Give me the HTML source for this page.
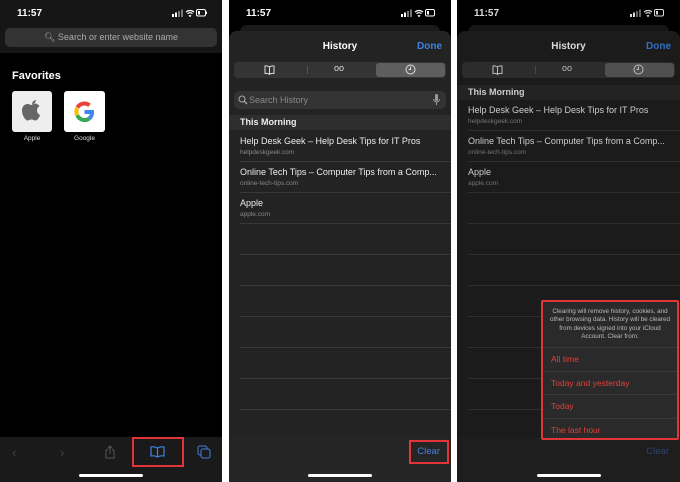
<!DOCTYPE html>
<html><head><meta charset="utf-8"><style>
*{margin:0;padding:0;box-sizing:border-box}
body{width:680px;height:482px;background:#fff;position:relative;overflow:hidden;font-family:"Liberation Sans",sans-serif;color:#fff}
.a{position:absolute}
.p{position:absolute;top:0;height:482px;background:#000;overflow:hidden}
.time{position:absolute;left:17px;top:8px;font-size:10px;font-weight:bold}
.stat{position:absolute;right:14px;top:9px;width:36px;height:8px}
.sheet{position:absolute;left:0;right:0;top:31px;bottom:0;background:#232323;border-radius:8px 8px 0 0}
.back{position:absolute;left:11px;right:11px;top:25px;height:20px;background:#1a1a1a;border-radius:7px}
.title{position:absolute;left:0;right:0;top:41px;text-align:center;font-size:10px;font-weight:bold}
.done{position:absolute;right:9px;top:41px;font-size:10px;font-weight:bold;color:#3f82e0}
.seg{position:absolute;left:5px;right:5px;top:62px;height:16px;background:#343434;border-radius:4px}
.seg .sel{position:absolute;right:1px;top:1px;width:69px;height:14px;background:#5e5e5e;border-radius:3px}
.hdr{position:absolute;left:0;right:0;height:15px;background:#2e2e2e;font-size:9px;font-weight:bold;padding-left:11px;line-height:15px;color:#eee}
.row{position:absolute;left:11px;right:0;height:31px;border-bottom:1px solid #383838}
.row b{position:absolute;left:0;top:5px;font-size:9px;font-weight:normal;color:#eee;white-space:nowrap}
.row i{position:absolute;left:0;top:18px;font-size:6.5px;font-style:normal;color:#888}
.tb{position:absolute;left:0;right:0;top:437px;bottom:0;background:#252525}
.home{position:absolute;bottom:5px;left:50%;margin-left:-32px;width:64px;height:3px;border-radius:2px;background:#fff}
</style></head><body>

<!-- Panel 1 -->
<div class="p" style="left:0;width:222px">
<div class="a" style="left:0;top:0;width:222px;height:53px;background:#161616"></div>
<div class="time">11:57</div>
<svg class="stat" viewBox="0 0 36 8"><rect x="0" y="5" width="2" height="3" fill="#fff"/><rect x="3" y="3.5" width="2" height="4.5" fill="#fff"/><rect x="6" y="2" width="2" height="6" fill="#777"/><rect x="9" y="0.5" width="2" height="7.5" fill="#777"/><path d="M14 3a6 6 0 0 1 8 0M15.5 4.6a4 4 0 0 1 5 0M17 6.2l1 1.2 1-1.2" stroke="#fff" stroke-width="1.2" fill="none"/><rect x="24.5" y="0.5" width="9" height="6.5" rx="1.5" stroke="#fff" fill="none"/><rect x="26" y="2" width="2" height="3.5" fill="#fff"/><rect x="34" y="2.5" width="1" height="2.5" fill="#fff"/></svg>
<div class="a" style="left:5px;top:28px;width:212px;height:19px;background:#333;border-radius:5px;font-size:9px;color:#aaa;text-align:center;line-height:19px">&#x1F50D;&#xFE0E; Search or enter website name</div>
<div class="a" style="left:12px;top:70px;font-size:11px;font-weight:bold">Favorites</div>
<div class="a" style="left:12px;top:91px;width:40px;height:41px;background:#eee;border-radius:3px"><svg viewBox="0 0 40 41" width="40" height="41"><path d="M24 9c-2 .3-4 2-4 4 2 0 4-2 4-4zM20 14c-1.5 0-3-1-4.5-1-3 0-5.5 2.5-5.5 6.5 0 5 3.5 10 5.5 10 1.3 0 2-1 4-1s2.5 1 4 1c2 0 4-3.5 4.5-5.5-2-1-3-2.5-3-4.5s1-3.5 2.5-4.5c-1-1.5-3-2.5-4.5-2.5-1.5 0-2.5 1-3 1z" fill="#666"/></svg></div>
<div class="a" style="left:64px;top:91px;width:41px;height:41px;background:#fff;border-radius:3px"><svg viewBox="0 0 41 41" width="41" height="41"><path d="M20.5 12.5a8 8 0 0 0-7 4" stroke="#ea4335" stroke-width="4" fill="none"/><path d="M20.5 12.5a8 8 0 0 1 5 1.8" stroke="#ea4335" stroke-width="4" fill="none"/><path d="M13.3 16.8a8 8 0 0 0 0 7.5" stroke="#fbbc05" stroke-width="4" fill="none"/><path d="M13.3 24.3a8 8 0 0 0 12 3.2" stroke="#34a853" stroke-width="4" fill="none"/><path d="M25.3 27.5a8 8 0 0 0 2.7-6.5h-7.5" stroke="#4285f4" stroke-width="4" fill="none"/></svg></div>
<div class="a" style="left:12px;top:135px;width:40px;text-align:center;font-size:6.5px;color:#ddd">Apple</div>
<div class="a" style="left:64px;top:135px;width:41px;text-align:center;font-size:6.5px;color:#ddd">Google</div>
<div class="tb" style="background:#1a1a1a"></div>
<div class="a" style="left:12px;top:445px;font-size:13px;color:#444">&#8249;</div>
<div class="a" style="left:60px;top:445px;font-size:13px;color:#444">&#8250;</div>
<svg class="a" style="left:104px;top:445px" width="12" height="14" viewBox="0 0 12 14"><path d="M4 5H2v8h8V5H8M6 9V1M3.5 3.5 6 1l2.5 2.5" stroke="#555" fill="none"/></svg>
<svg class="a" style="left:150px;top:446px" width="15" height="12" viewBox="0 0 15 12"><path d="M7.5 2C6 1 3 .5 1 1v9c2-.5 5 0 6.5 1 1.5-1 4.5-1.5 6.5-1V1c-2-.5-5 0-6.5 1zM7.5 2v9" stroke="#3f82e0" stroke-width="1.2" fill="none"/></svg>
<svg class="a" style="left:197px;top:445px" width="14" height="14" viewBox="0 0 14 14"><rect x="1" y="1" width="9" height="9" rx="2" stroke="#3f82e0" fill="none"/><rect x="4" y="4" width="9" height="9" rx="2" stroke="#3f82e0" fill="#1a1a1a"/></svg>
<div class="a" style="left:132px;top:437px;width:52px;height:30px;border:2px solid #e0363a"></div>
<div class="home"></div>
</div>

<!-- Panel 2 -->
<div class="p" style="left:229px;width:222px">
<div class="time">11:57</div>
<svg class="stat" viewBox="0 0 36 8"><rect x="0" y="5" width="2" height="3" fill="#fff"/><rect x="3" y="3.5" width="2" height="4.5" fill="#fff"/><rect x="6" y="2" width="2" height="6" fill="#777"/><rect x="9" y="0.5" width="2" height="7.5" fill="#777"/><path d="M14 3a6 6 0 0 1 8 0M15.5 4.6a4 4 0 0 1 5 0M17 6.2l1 1.2 1-1.2" stroke="#fff" stroke-width="1.2" fill="none"/><rect x="24.5" y="0.5" width="9" height="6.5" rx="1.5" stroke="#fff" fill="none"/><rect x="26" y="2" width="2" height="3.5" fill="#fff"/></svg>
<div class="back"></div>
<div class="sheet"></div>
<div class="title">History</div><div class="done">Done</div>
<div class="seg"><div class="sel"></div>
<svg class="a" style="left:30px;top:3px" width="11" height="10" viewBox="0 0 11 10"><path d="M5.5 2C4.5 1 2 .7 1 1v7.5c1.5-.3 3.5 0 4.5.8 1-.8 3-1.1 4.5-.8V1c-1-.3-3.5 0-4.5 1zM5.5 2v7" stroke="#ddd" fill="none"/></svg>
<div class="a" style="left:100px;top:1px;font-size:9px;color:#ddd">oo</div>
<svg class="a" style="left:171px;top:2px" width="11" height="11" viewBox="0 0 11 11"><circle cx="5.5" cy="5.5" r="4.5" stroke="#ddd" fill="none"/><path d="M5.5 2.5v3H3.5" stroke="#ddd" fill="none"/></svg>
<div class="a" style="left:73px;top:4px;width:1px;height:8px;background:#555"></div></div>
<div class="a" style="left:5px;top:91px;width:212px;height:18px;background:#333;border-radius:5px;font-size:9px;color:#888;line-height:18px;padding-left:15px">Search History</div>
<svg class="a" style="left:9px;top:95px" width="10" height="10" viewBox="0 0 10 10"><circle cx="4" cy="4" r="3" stroke="#aaa" fill="none"/><path d="M6.2 6.2 9 9" stroke="#aaa" stroke-width="1.3"/></svg>
<svg class="a" style="left:204px;top:94px" width="7" height="12" viewBox="0 0 7 12"><rect x="2" y="0" width="3" height="7" rx="1.5" fill="#999"/><path d="M.5 5a3 3 0 0 0 6 0M3.5 8v3" stroke="#999" fill="none"/></svg>
<div class="hdr" style="top:115px">This Morning</div>
<div class="row" style="top:131px"><b>Help Desk Geek – Help Desk Tips for IT Pros</b><i>helpdeskgeek.com</i></div>
<div class="row" style="top:162px"><b>Online Tech Tips – Computer Tips from a Comp...</b><i>online-tech-tips.com</i></div>
<div class="row" style="top:193px"><b>Apple</b><i>apple.com</i></div>
<div class="row" style="top:224px"></div><div class="row" style="top:255px"></div><div class="row" style="top:286px"></div><div class="row" style="top:317px"></div><div class="row" style="top:348px"></div><div class="row" style="top:379px"></div><div class="row" style="top:410px;border:none"></div>
<div class="tb"></div>
<div class="a" style="right:11px;top:446px;font-size:9.5px;color:#3f82e0">Clear</div>
<div class="a" style="left:180px;top:440px;width:40px;height:24px;border:2px solid #e0363a"></div>
<div class="home"></div>
</div>

<!-- Panel 3 -->
<div class="p" style="left:457px;width:223px">
<div class="time">11:57</div>
<svg class="stat" viewBox="0 0 36 8"><rect x="0" y="5" width="2" height="3" fill="#fff"/><rect x="3" y="3.5" width="2" height="4.5" fill="#fff"/><rect x="6" y="2" width="2" height="6" fill="#777"/><rect x="9" y="0.5" width="2" height="7.5" fill="#777"/><path d="M14 3a6 6 0 0 1 8 0M15.5 4.6a4 4 0 0 1 5 0M17 6.2l1 1.2 1-1.2" stroke="#fff" stroke-width="1.2" fill="none"/><rect x="24.5" y="0.5" width="9" height="6.5" rx="1.5" stroke="#fff" fill="none"/><rect x="26" y="2" width="2" height="3.5" fill="#fff"/></svg>
<div class="back"></div>
<div class="sheet" style="background:#202020"></div>
<div class="title">History</div><div class="done">Done</div>
<div class="seg"><div class="sel"></div>
<svg class="a" style="left:30px;top:3px" width="11" height="10" viewBox="0 0 11 10"><path d="M5.5 2C4.5 1 2 .7 1 1v7.5c1.5-.3 3.5 0 4.5.8 1-.8 3-1.1 4.5-.8V1c-1-.3-3.5 0-4.5 1zM5.5 2v7" stroke="#ddd" fill="none"/></svg>
<div class="a" style="left:100px;top:1px;font-size:9px;color:#ddd">oo</div>
<svg class="a" style="left:171px;top:2px" width="11" height="11" viewBox="0 0 11 11"><circle cx="5.5" cy="5.5" r="4.5" stroke="#ddd" fill="none"/><path d="M5.5 2.5v3H3.5" stroke="#ddd" fill="none"/></svg>
<div class="a" style="left:73px;top:4px;width:1px;height:8px;background:#555"></div></div>
<div class="hdr" style="top:85px;background:#2a2a2a">This Morning</div>
<div class="row" style="top:100px"><b>Help Desk Geek – Help Desk Tips for IT Pros</b><i>helpdeskgeek.com</i></div>
<div class="row" style="top:131px"><b>Online Tech Tips – Computer Tips from a Comp...</b><i>online-tech-tips.com</i></div>
<div class="row" style="top:162px"><b>Apple</b><i>apple.com</i></div>
<div class="row" style="top:193px"></div><div class="row" style="top:224px"></div><div class="row" style="top:255px"></div><div class="row" style="top:286px"></div><div class="row" style="top:317px"></div><div class="row" style="top:348px"></div><div class="row" style="top:379px"></div><div class="row" style="top:410px;border:none"></div>
<div class="a" style="left:0;top:0;width:223px;height:482px;background:rgba(0,0,0,0.15)"></div>
<div class="tb" style="background:#1e1e1e"></div>
<div class="a" style="right:11px;top:446px;font-size:9.5px;color:#2c4670">Clear</div>
<div class="a" style="left:84px;top:300px;width:138px;height:140px;border:2px solid #e0363a;background:#2a2a2a;border-radius:2px">
 <div style="padding:6px 6px 0;height:46px;font-size:6.3px;line-height:8.3px;color:#bbb;text-align:center;border-bottom:1px solid #3a3a3a">Clearing will remove history, cookies, and other browsing data. History will be cleared from devices signed into your iCloud Account. Clear from:</div>
 <div style="height:23.5px;line-height:23px;font-size:8.5px;color:#e0403c;padding-left:8px;border-bottom:1px solid #3a3a3a">All time</div>
 <div style="height:23.5px;line-height:23px;font-size:8.5px;color:#e0403c;padding-left:8px;border-bottom:1px solid #3a3a3a">Today and yesterday</div>
 <div style="height:23.5px;line-height:23px;font-size:8.5px;color:#e0403c;padding-left:8px;border-bottom:1px solid #3a3a3a">Today</div>
 <div style="height:23px;line-height:23px;font-size:8.5px;color:#e0403c;padding-left:8px">The last hour</div>
</div>
<div class="home"></div>
</div>
</body></html>
